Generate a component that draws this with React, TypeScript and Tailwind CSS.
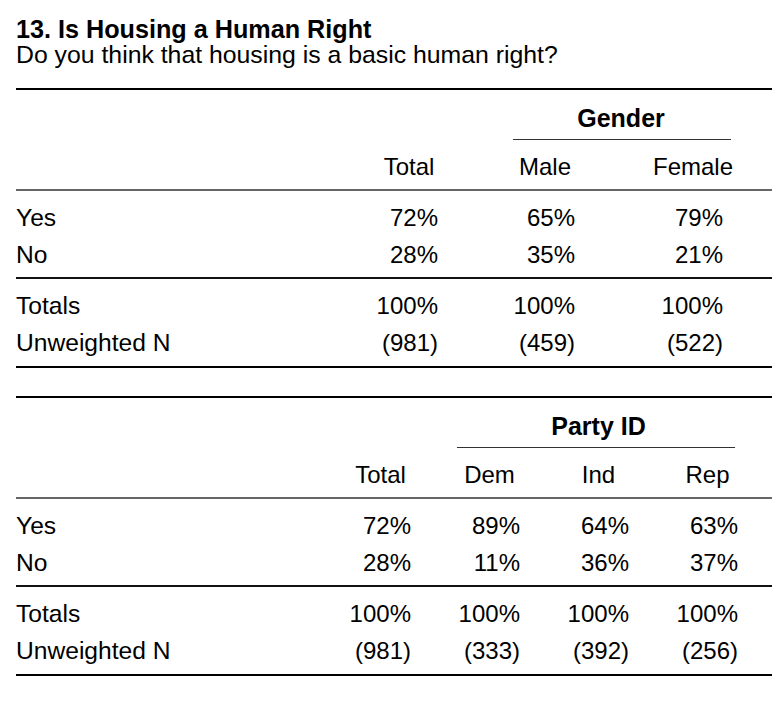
import React from "react";

type Col = { label: string; w: string; hp: string; np: string; extra?: string };
type Row = { label: string; values: string[] };

function Rule({ cls }: { cls: string }) {
  return <div className={cls} />;
}

function Table({
  cols,
  spanner,
  spanW,
  spanMr,
  lineMx,
  top,
  bottom,
}: {
  cols: Col[];
  spanner: string;
  spanW: string;
  spanMr: string;
  lineMx: string;
  top: Row[];
  bottom: Row[];
}) {
  const renderRow = (r: Row) => (
    <div key={r.label} className="flex h-[37px] items-center leading-[37px]">
      <div className="flex-1 text-[24.6px]">{r.label}</div>
      {r.values.map((v, i) => (
        <div key={i} className={`${cols[i].w} ${cols[i].np} ${cols[i].extra ?? ""} text-right`}>
          {v}
        </div>
      ))}
      <div className={spanMr} />
    </div>
  );
  return (
    <div>
      <Rule cls="h-[2px] bg-black" />
      <div className="flex">
        <div className="flex-1" />
        <div className={`${spanW} pt-[14px]`}>
          <div className="text-center text-[25px] font-bold leading-[28px]">{spanner}</div>
          <div className={`mt-[7px] h-px bg-[#333] ${lineMx}`} />
        </div>
        <div className={spanMr} />
      </div>
      <div className="flex pt-[13px] pb-[8px] leading-[28px]">
        <div className="flex-1" />
        {cols.map((c) => (
          <div key={c.label} className={`${c.w} ${c.hp} ${c.extra ?? ""} text-center`}>
            {c.label}
          </div>
        ))}
        <div className={spanMr} />
      </div>
      <Rule cls="h-[2px] bg-[#666]" />
      <div className="pt-[8px] pb-[4px]">{top.map(renderRow)}</div>
      <Rule cls="h-[1.5px] bg-[#111]" />
      <div className="pt-[8.5px] pb-[5px]">{bottom.map(renderRow)}</div>
      <Rule cls="h-[2px] bg-black" />
    </div>
  );
}

export default function App() {
  const cols1: Col[] = [
    { label: "Total", w: "w-[138px]", hp: "pr-0", np: "pr-[40px]" },
    { label: "Male", w: "w-[134px]", hp: "pr-0", np: "pr-[37px]" },
    { label: "Female", w: "w-[142px]", hp: "pr-0", np: "pr-[41px]", extra: "ml-[10px]" },
  ];
  const cols2: Col[] = [
    { label: "Total", w: "w-[109px]", hp: "pr-0", np: "pr-[24px]" },
    { label: "Dem", w: "w-[109px]", hp: "pr-0", np: "pr-[24px]" },
    { label: "Ind", w: "w-[109px]", hp: "pr-0", np: "pr-[24px]" },
    { label: "Rep", w: "w-[109px]", hp: "pr-0", np: "pr-[24px]" },
  ];
  return (
    <div className="h-[716px] w-[772px] bg-white font-['Liberation_Sans',Arial,Helvetica,sans-serif] text-[24px] text-black">
      <div className="pl-4 pt-4">
        <div className="text-[25.2px] font-bold leading-[26px]">13. Is Housing a Human Right</div>
        <div className="text-[24.8px] leading-[26px]">Do you think that housing is a basic human right?</div>
      </div>
      <div className="ml-4 mt-[20px]">
        <Table
          cols={cols1}
          spanner="Gender"
          spanW="w-[286px]"
          spanMr="w-[8px]"
          lineMx="ml-[35px] mr-[33px]"
          top={[
            { label: "Yes", values: ["72%", "65%", "79%"] },
            { label: "No", values: ["28%", "35%", "21%"] },
          ]}
          bottom={[
            { label: "Totals", values: ["100%", "100%", "100%"] },
            { label: "Unweighted N", values: ["(981)", "(459)", "(522)"] },
          ]}
        />
        <div className="h-[28px]" />
        <Table
          cols={cols2}
          spanner="Party ID"
          spanW="w-[327px]"
          spanMr="w-[10px]"
          lineMx="ml-[22px] mr-[27px]"
          top={[
            { label: "Yes", values: ["72%", "89%", "64%", "63%"] },
            { label: "No", values: ["28%", "11%", "36%", "37%"] },
          ]}
          bottom={[
            { label: "Totals", values: ["100%", "100%", "100%", "100%"] },
            { label: "Unweighted N", values: ["(981)", "(333)", "(392)", "(256)"] },
          ]}
        />
      </div>
    </div>
  );
}
